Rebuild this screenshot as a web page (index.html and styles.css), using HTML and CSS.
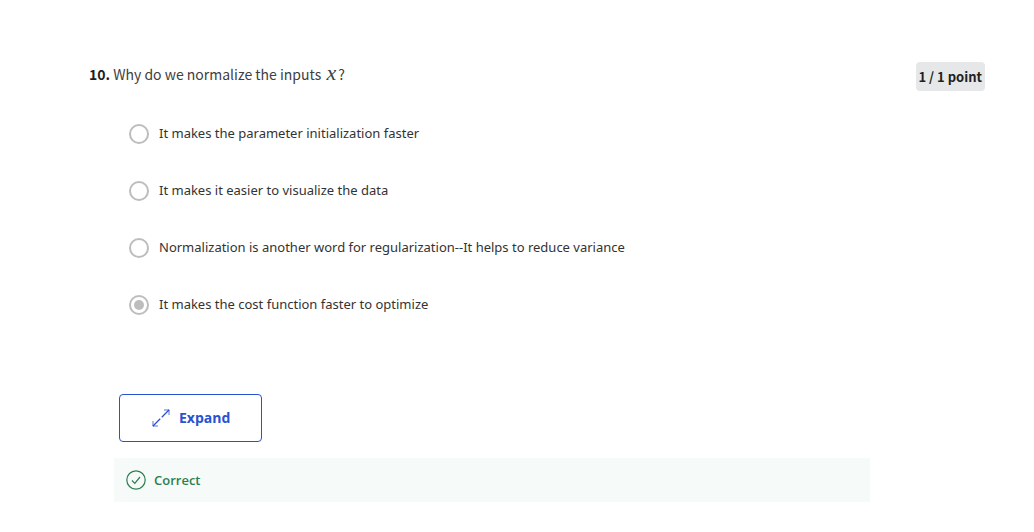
FILE: index.html
```html
<!DOCTYPE html>
<html lang="en">
<head>
<meta charset="utf-8">
<meta name="viewport" content="width=device-width, initial-scale=1">
<title>Quiz question</title>
<link rel="stylesheet" href="styles.css">
</head>
<body>
<form class="question">
  <header class="head">
    <p class="prompt" id="prompt"><b>10.</b> Why do we normalize the inputs <i class="math">x</i>?</p>
    <span class="points">1 / 1 point</span>
  </header>
  <div class="options" role="radiogroup" aria-labelledby="prompt">
    <label class="option"><input class="radio" type="radio" name="answer"><span>It makes the parameter initialization faster</span></label>
    <label class="option"><input class="radio" type="radio" name="answer"><span>It makes it easier to visualize the data</span></label>
    <label class="option"><input class="radio" type="radio" name="answer"><span>Normalization is another word for regularization--It helps to reduce variance</span></label>
    <label class="option"><input class="radio" type="radio" name="answer" checked><span>It makes the cost function faster to optimize</span></label>
  </div>
  <button class="expand" type="button">
    <svg class="expand-icon" viewBox="0 0 18 18" aria-hidden="true"><path class="shaft" d="M17.200.8l-7.400 7.400M8.200 9.800l-7.400 7.400"/><path class="tips" d="M12 1h5v5M1 12v5h5"/></svg>
    <span>Expand</span>
  </button>
  <div class="feedback">
    <svg class="check-icon" viewBox="0 0 20 20" aria-hidden="true"><circle cx="10" cy="10" r="9.200"/><path d="M6 10.500l2.800 2.800L14 7"/></svg>
    <span>Correct</span>
  </div>
</form>
</body>
</html>
```
FILE: styles.css
```css
body {
  margin: 0;
  background: #fff;
  color: #333;
  font: 14px/20px "Noto Sans", "Open Sans", sans-serif;
}

.question {
  padding: 62px 49px 30px 89px;
}

.head {
  display: flex;
  justify-content: space-between;
  align-items: flex-start;
  font-family: "Noto Sans CJK SC", sans-serif;
}

.prompt {
  margin: 0;
  color: #404040;
  font-size: 14px;
  line-height: 25px;
}

.prompt b {
  color: #1f1f1f;
}

.math {
  margin: 0 2px;
  font: italic 22px/20px "Liberation Serif", serif;
}

.points {
  padding: 4px 3px;
  border-radius: 4px;
  background: #e5e7e8;
  color: #1f1f1f;
  font-size: 13px;
  font-weight: 700;
  line-height: 21px;
}

.options {
  display: grid;
  gap: 37px;
  justify-items: start;
  margin: 33px 0 79px 40px;
}

.option {
  display: flex;
  gap: 10px;
  font-size: 13px;
}

.option span {
  line-height: 19px;
}

.radio {
  appearance: none;
  flex: none;
  box-sizing: border-box;
  width: 20px;
  height: 20px;
  margin: 0;
  border: 2px solid #bdbdbd;
  border-radius: 50%;
}

.radio:checked {
  padding: 3px;
  background: #bdbdbd content-box;
}

.expand {
  display: flex;
  align-items: center;
  gap: 9px;
  height: 48px;
  margin-left: 30px;
  padding: 0 31px 0 32px;
  border: 1px solid #2a52d0;
  border-radius: 4px;
  background: #fff;
  color: #2a52d0;
  font: 700 14px/20px "Open Sans", sans-serif;
}

.expand-icon {
  width: 18px;
  height: 18px;
  fill: none;
  stroke: #2a52d0;
}

.shaft {
  stroke-width: 1.300;
}

.tips {
  stroke-opacity: 0.8;
}

.feedback {
  display: flex;
  align-items: center;
  gap: 8px;
  max-width: 732px;
  margin: 16px 0 0 25px;
  padding: 12px;
  background: #f6fbf9;
  color: #2c7f4e;
  font: 600 13px/20px "Open Sans", sans-serif;
}

.check-icon {
  width: 20px;
  height: 20px;
  fill: none;
  stroke: #2c7f4e;
  stroke-width: 1.200;
}
```
